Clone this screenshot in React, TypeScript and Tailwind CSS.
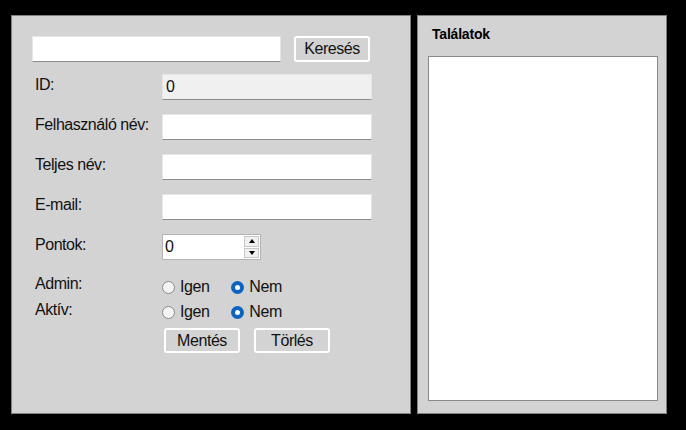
import { ReactElement } from "react";

function Field({ label, value, gray }: { label: string; value?: string; gray?: boolean }): ReactElement {
  return (
    <div className="flex items-start h-[26px]">
      <span className="w-[130px] pl-[3px] pt-[2px] leading-[18px]">{label}</span>
      <div
        className={`w-[210px] h-[26px] border border-[#e6e6e6] border-b-[#8c8c8c] px-[3px] flex items-center ${
          gray ? "bg-[#f0f0f0]" : "bg-white"
        }`}
      >
        {value}
      </div>
    </div>
  );
}

function Radio({ checked, text }: { checked?: boolean; text: string }): ReactElement {
  return (
    <span className="flex items-center leading-[18px]">
      {checked ? (
        <span className="w-[13px] h-[13px] rounded-full bg-[#0b63c4] flex items-center justify-center">
          <span className="w-[5px] h-[5px] rounded-full bg-white" />
        </span>
      ) : (
        <span className="w-[13px] h-[13px] rounded-full border border-[#8a8a8a] bg-[#f4f4f4]" />
      )}
      <span className="ml-[5px]">{text}</span>
    </span>
  );
}

function RadioRow({ label, offset }: { label: string; offset: string }): ReactElement {
  return (
    <div className="flex items-start h-[25px]">
      <span className={`w-[130px] pl-[3px] leading-[18px] ${offset}`}>{label}</span>
      <div className="flex gap-[22px] mt-[3px]">
        <Radio text="Igen" />
        <Radio checked text="Nem" />
      </div>
    </div>
  );
}

export default function App(): ReactElement {
  const btn =
    "w-[76px] h-[25px] border-2 border-white rounded-[3px] bg-[#d3d3d3] flex items-center justify-center leading-[18px]";
  return (
    <div
      className="w-[686px] h-[430px] bg-black flex gap-[6px] pl-[11px] pt-[15px] text-[16px] tracking-[-0.45px] text-[#111]"
      style={{ fontFamily: '"Liberation Sans", Arial, sans-serif' }}
    >
      <div className="w-[400px] h-[399px] bg-[#d3d3d3] border border-[#808080] pl-[20px] pt-[20px] flex flex-col">
        <div className="flex items-center h-[26px]">
          <div className="w-[249px] h-[26px] bg-white border border-[#e6e6e6] border-b-[#8c8c8c]" />
          <button className={`${btn} ml-[13px] h-[26px]`}>Keresés</button>
        </div>
        <div className="flex flex-col gap-[14px] mt-[12px]">
          <Field label="ID:" value="0" gray />
          <Field label="Felhasználó név:" />
          <Field label="Teljes név:" />
          <Field label="E-mail:" />
          <div className="flex items-start h-[26px]">
            <span className="w-[130px] pl-[3px] pt-[2px] leading-[18px]">Pontok:</span>
            <div className="w-[99px] h-[26px] bg-white border border-[#b4b4b4] flex items-center pl-[2px]">
              <span className="flex-1">0</span>
              <div className="w-[15px] h-[22px] mr-[1px] flex flex-col gap-[1px]">
                <div className="flex-1 bg-[#f0f0f0] border border-[#c8c8c8] flex items-center justify-center">
                  <span className="w-0 h-0 border-l-[3px] border-r-[3px] border-b-[4px] border-l-transparent border-r-transparent border-b-black" />
                </div>
                <div className="flex-1 bg-[#f0f0f0] border border-[#c8c8c8] flex items-center justify-center">
                  <span className="w-0 h-0 border-l-[3px] border-r-[3px] border-t-[4px] border-l-transparent border-r-transparent border-t-black" />
                </div>
              </div>
            </div>
          </div>
        </div>
        <div className="mt-[15px] flex flex-col">
          <RadioRow label="Admin:" offset="" />
          <RadioRow label="Aktív:" offset="mt-[1px]" />
        </div>
        <div className="flex gap-[14px] mt-[3px] ml-[132px]">
          <button className={btn}>Mentés</button>
          <button className={btn}>Törlés</button>
        </div>
      </div>
      <div className="w-[250px] h-[399px] bg-[#d3d3d3] border border-[#808080] pt-[10px] pl-[10px] flex flex-col">
        <div className="pl-[4px] text-[14px] font-bold leading-[16px] tracking-[-0.2px] text-black">Találatok</div>
        <div className="mt-[14px] w-[230px] h-[345px] bg-white border border-[#8a8a8a]" />
      </div>
    </div>
  );
}
